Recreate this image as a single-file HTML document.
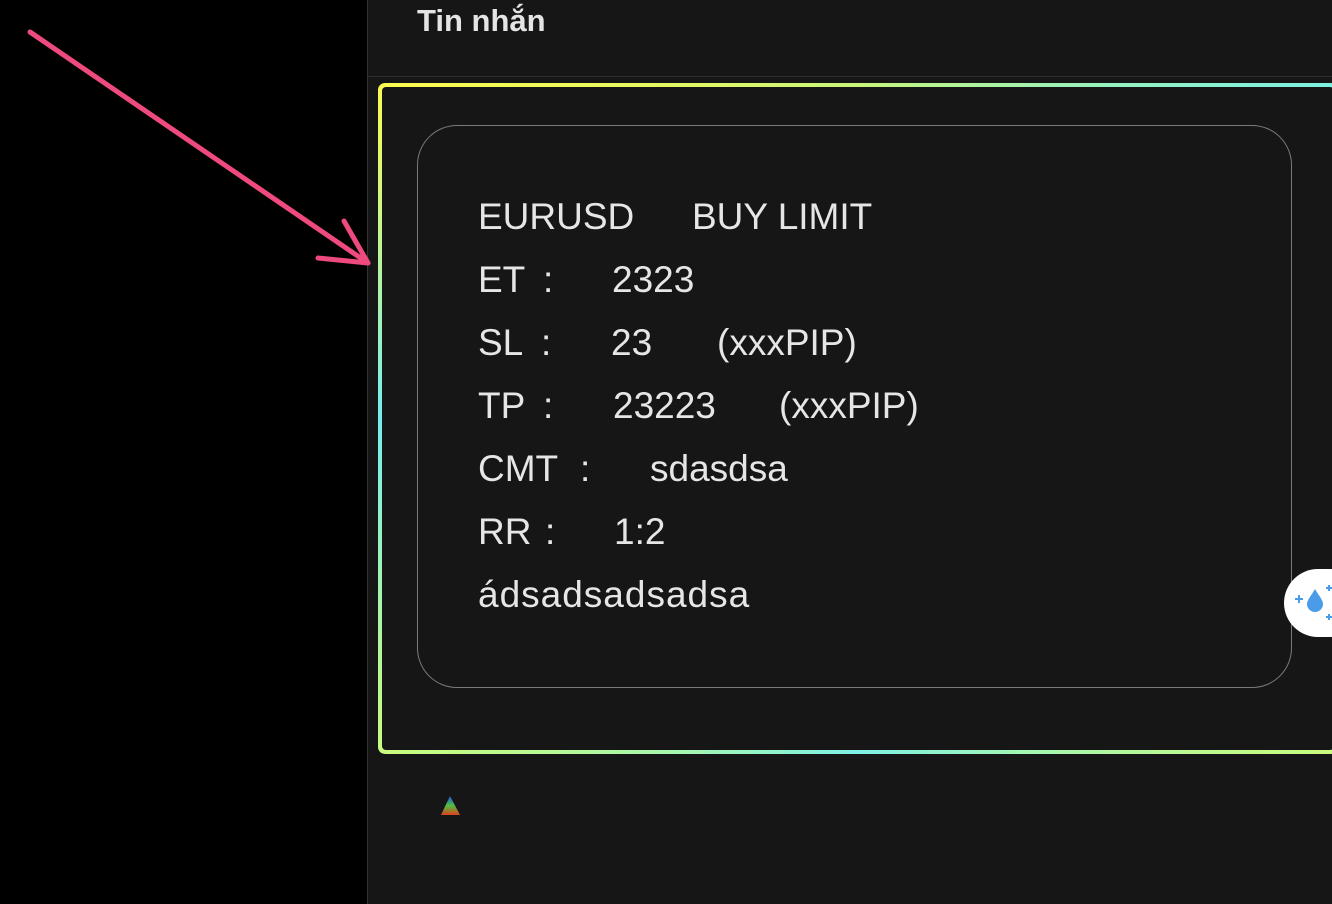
<!DOCTYPE html>
<html><head><meta charset="utf-8"><style>
*{margin:0;padding:0;box-sizing:border-box}
body{width:1332px;height:904px;background:#000;position:relative;overflow:hidden;font-family:"Liberation Sans","DejaVu Sans",sans-serif}
.main{position:absolute;left:367px;top:0;width:965px;height:904px;background:#161616;border-left:1.5px solid #333}
.hdr{position:absolute;left:0;top:0;width:965px;height:77px;border-bottom:1.5px solid #2e2e2e}
.hdr span{position:absolute;left:49px;top:3px;font-size:31px;font-weight:bold;color:#e4e4e4}
.glow{position:absolute;left:378px;top:83px;width:960px;height:671px;border-radius:7px;padding:4px;
background:conic-gradient(from 0deg at 50% 50%,#c8f57a 0deg,#7ef0e0 55deg,#8af0d8 90deg,#c9fb7e 125deg,#7ef0e6 180deg,#c9fb7e 235deg,#72eef0 270deg,#fbfb50 305deg,#c8f57a 360deg)}
.glow .in{width:100%;height:100%;background:#161616;border-radius:4px}
.card{position:absolute;left:417px;top:125px;width:875px;height:563px;border:1.5px solid #7a7a7a;border-radius:40px}
.t{position:absolute;font-size:37px;color:#e6e6e6;white-space:pre}
.bubble{position:absolute;left:1284px;top:569px;width:80px;height:68px;border-radius:34px;background:#fff}
</style></head><body>
<div class="main"><div class="hdr"><span>Tin nhắn</span></div></div>
<div class="glow"><div class="in"></div></div>
<div class="card"></div>
<div class="t" style="top:196px;left:478px">EURUSD</div><div class="t" style="top:196px;left:692px">BUY LIMIT</div>
<div class="t" style="top:259px;left:478px">ET</div><div class="t" style="top:259px;left:543px">:</div><div class="t" style="top:259px;left:612px">2323</div>
<div class="t" style="top:322px;left:478px">SL</div><div class="t" style="top:322px;left:541px">:</div><div class="t" style="top:322px;left:611px">23</div><div class="t" style="top:322px;left:717px">(xxxPIP)</div>
<div class="t" style="top:385px;left:478px">TP</div><div class="t" style="top:385px;left:543px">:</div><div class="t" style="top:385px;left:613px">23223</div><div class="t" style="top:385px;left:779px">(xxxPIP)</div>
<div class="t" style="top:448px;left:478px">CMT</div><div class="t" style="top:448px;left:580px">:</div><div class="t" style="top:448px;left:650px">sdasdsa</div>
<div class="t" style="top:511px;left:478px">RR</div><div class="t" style="top:511px;left:545px">:</div><div class="t" style="top:511px;left:614px">1:2</div>
<div class="t" style="top:574px;left:478px;letter-spacing:1px">ádsadsadsadsa</div>
<div class="bubble"></div>
<svg style="position:absolute;left:1284px;top:569px" width="48" height="68">
<path d="M15 26v8M11 30h8" stroke="#4a9be8" stroke-width="2"/>
<path d="M31 20c-4 7-8 11-8 15a8 8 0 0 0 16 0c0-4-4-8-8-15z" fill="#4a9be8"/>
<path d="M45 16v6M42 19h6M45 45v6M42 48h6" stroke="#4a9be8" stroke-width="2"/>
</svg>
<svg style="position:absolute;left:440px;top:796px" width="22" height="22">
<defs><linearGradient id="g" x1="0" y1="0" x2="0" y2="1"><stop offset="0" stop-color="#2050e0"/><stop offset=".5" stop-color="#50c040"/><stop offset="1" stop-color="#e04020"/></linearGradient></defs>
<path d="M10 0L1 19h19z" fill="url(#g)"/></svg>
<svg style="position:absolute;left:0;top:0" width="400" height="300">
<path d="M30 32L368 263" stroke="#ee4a7e" stroke-width="5" stroke-linecap="round"/>
<path d="M344 221L368 263L318 258" fill="none" stroke="#ee4a7e" stroke-width="5" stroke-linecap="round" stroke-linejoin="round"/>
</svg>
</body></html>
